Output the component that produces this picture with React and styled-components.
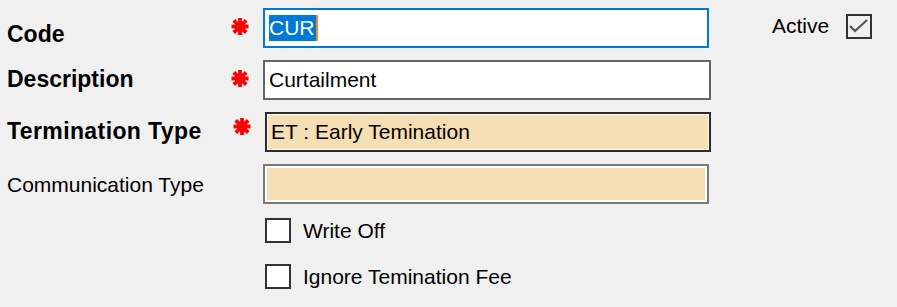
import React from "react";
import styled, { createGlobalStyle } from "styled-components";

const GlobalStyle = createGlobalStyle`
  html, body {
    margin: 0;
    padding: 0;
    background: #f0f0f0;
  }
  body {
    font-family: "Liberation Sans", Arial, sans-serif;
    color: #000;
  }
`;

const Form = styled.div`
  width: 897px;
  height: 307px;
  box-sizing: border-box;
  padding: 8px 0 0 7px;
  display: flex;
  flex-direction: column;
  overflow: hidden;
`;

const FieldRow = styled.div`
  display: flex;
  align-items: flex-start;
  height: 40px;
  margin-bottom: 12px;
`;

const Label = styled.div`
  width: 224px;
  flex: none;
  padding-top: ${(p) => p.$offset || 0}px;
  font-size: ${(p) => (p.$bold ? "23px" : "21px")};
  font-weight: ${(p) => (p.$bold ? 700 : 400)};
  letter-spacing: ${(p) => p.$spacing || 0}px;
  line-height: 26px;
  white-space: nowrap;
`;

const Required = styled.div`
  width: 32px;
  flex: none;
  display: flex;
  padding-top: ${(p) => p.$top || 10}px;
  padding-left: ${(p) => p.$shift || 0}px;
  box-sizing: border-box;
`;

const TextBox = styled.div`
  box-sizing: border-box;
  width: ${(p) => p.$width || 446}px;
  height: 40px;
  margin-left: ${(p) => p.$shift || 0}px;
  border: 2px solid ${(p) => p.$border || "#646464"};
  background: ${(p) => (p.$lookup ? "#f5deb3" : "#fff")};
  box-shadow: ${(p) => (p.$lookup ? `inset 0 0 0 ${p.$inner || 1}px #fff` : "none")};
  display: flex;
  align-items: center;
  padding-left: ${(p) => p.$pad || 4}px;
  font-size: 21px;
  line-height: 24px;
  white-space: nowrap;
`;

const Selection = styled.span`
  display: inline-block;
  height: 26px;
  line-height: 26px;
  background: #0078d7;
  color: #fff;
  padding-right: 1px;
`;

const Caret = styled.span`
  display: inline-block;
  width: 2px;
  height: 26px;
  background: #f7882a;
`;

const ActiveGroup = styled.div`
  display: flex;
  align-items: center;
  gap: 17px;
  margin-left: 63px;
  height: 40px;
  margin-top: -2px;
  font-size: 21px;
`;

const CheckRow = styled.div`
  display: flex;
  align-items: center;
  gap: 12px;
  height: 25px;
  padding-left: 258px;
  margin-top: ${(p) => p.$top || 0}px;
  font-size: 21px;
`;

const Box = styled.div`
  box-sizing: border-box;
  width: 26px;
  height: 25px;
  border: 2px solid #333;
  background: ${(p) => (p.$flat ? "transparent" : "#fff")};
  display: flex;
  align-items: center;
  justify-content: center;
`;

function Asterisk() {
  return (
    <svg width="18" height="17" viewBox="0 0 18 17">
      <g stroke="#ff0000" strokeWidth="3.8" strokeLinecap="butt">
        <line x1="9" y1="0" x2="9" y2="17" />
        <line x1="0.5" y1="8.5" x2="17.5" y2="8.5" />
        <line x1="2.8" y1="2.4" x2="15.2" y2="14.6" />
        <line x1="15.2" y1="2.4" x2="2.8" y2="14.6" />
      </g>
      <circle cx="9" cy="8.5" r="5.2" fill="#ff0000" />
    </svg>
  );
}

function CheckMark() {
  return (
    <svg width="22" height="21" viewBox="0 0 22 21">
      <polyline
        points="2,10 7,15 19,4"
        fill="none"
        stroke="#555"
        strokeWidth="2.2"
      />
    </svg>
  );
}

export default function App() {
  return (
    <>
      <GlobalStyle />
      <Form>
        <FieldRow>
          <Label $bold $offset={13}>Code</Label>
          <Required>
            <Asterisk />
          </Required>
          <TextBox $border="#0078d7">
            <Selection>CUR</Selection>
            <Caret />
          </TextBox>
          <ActiveGroup>
            <span>Active</span>
            <Box $flat>
              <CheckMark />
            </Box>
          </ActiveGroup>
        </FieldRow>

        <FieldRow>
          <Label $bold $offset={6}>Description</Label>
          <Required>
            <Asterisk />
          </Required>
          <TextBox $width={448} $pad={4}>Curtailment</TextBox>
        </FieldRow>

        <FieldRow>
          <Label $bold $offset={6} $spacing={0.4}>Termination Type</Label>
          <Required $top={6} $shift={2}>
            <Asterisk />
          </Required>
          <TextBox $lookup $border="#2b2b2b" $shift={2} $pad={4}>
            ET : Early Temination
          </TextBox>
        </FieldRow>

        <FieldRow>
          <Label $offset={8}>Communication Type</Label>
          <Required />
          <TextBox $lookup $inner={2} $border="#7a7a7a" />
        </FieldRow>

        <CheckRow $top={2}>
          <Box />
          <span>Write Off</span>
        </CheckRow>
        <CheckRow $top={21}>
          <Box />
          <span>Ignore Temination Fee</span>
        </CheckRow>
      </Form>
    </>
  );
}
